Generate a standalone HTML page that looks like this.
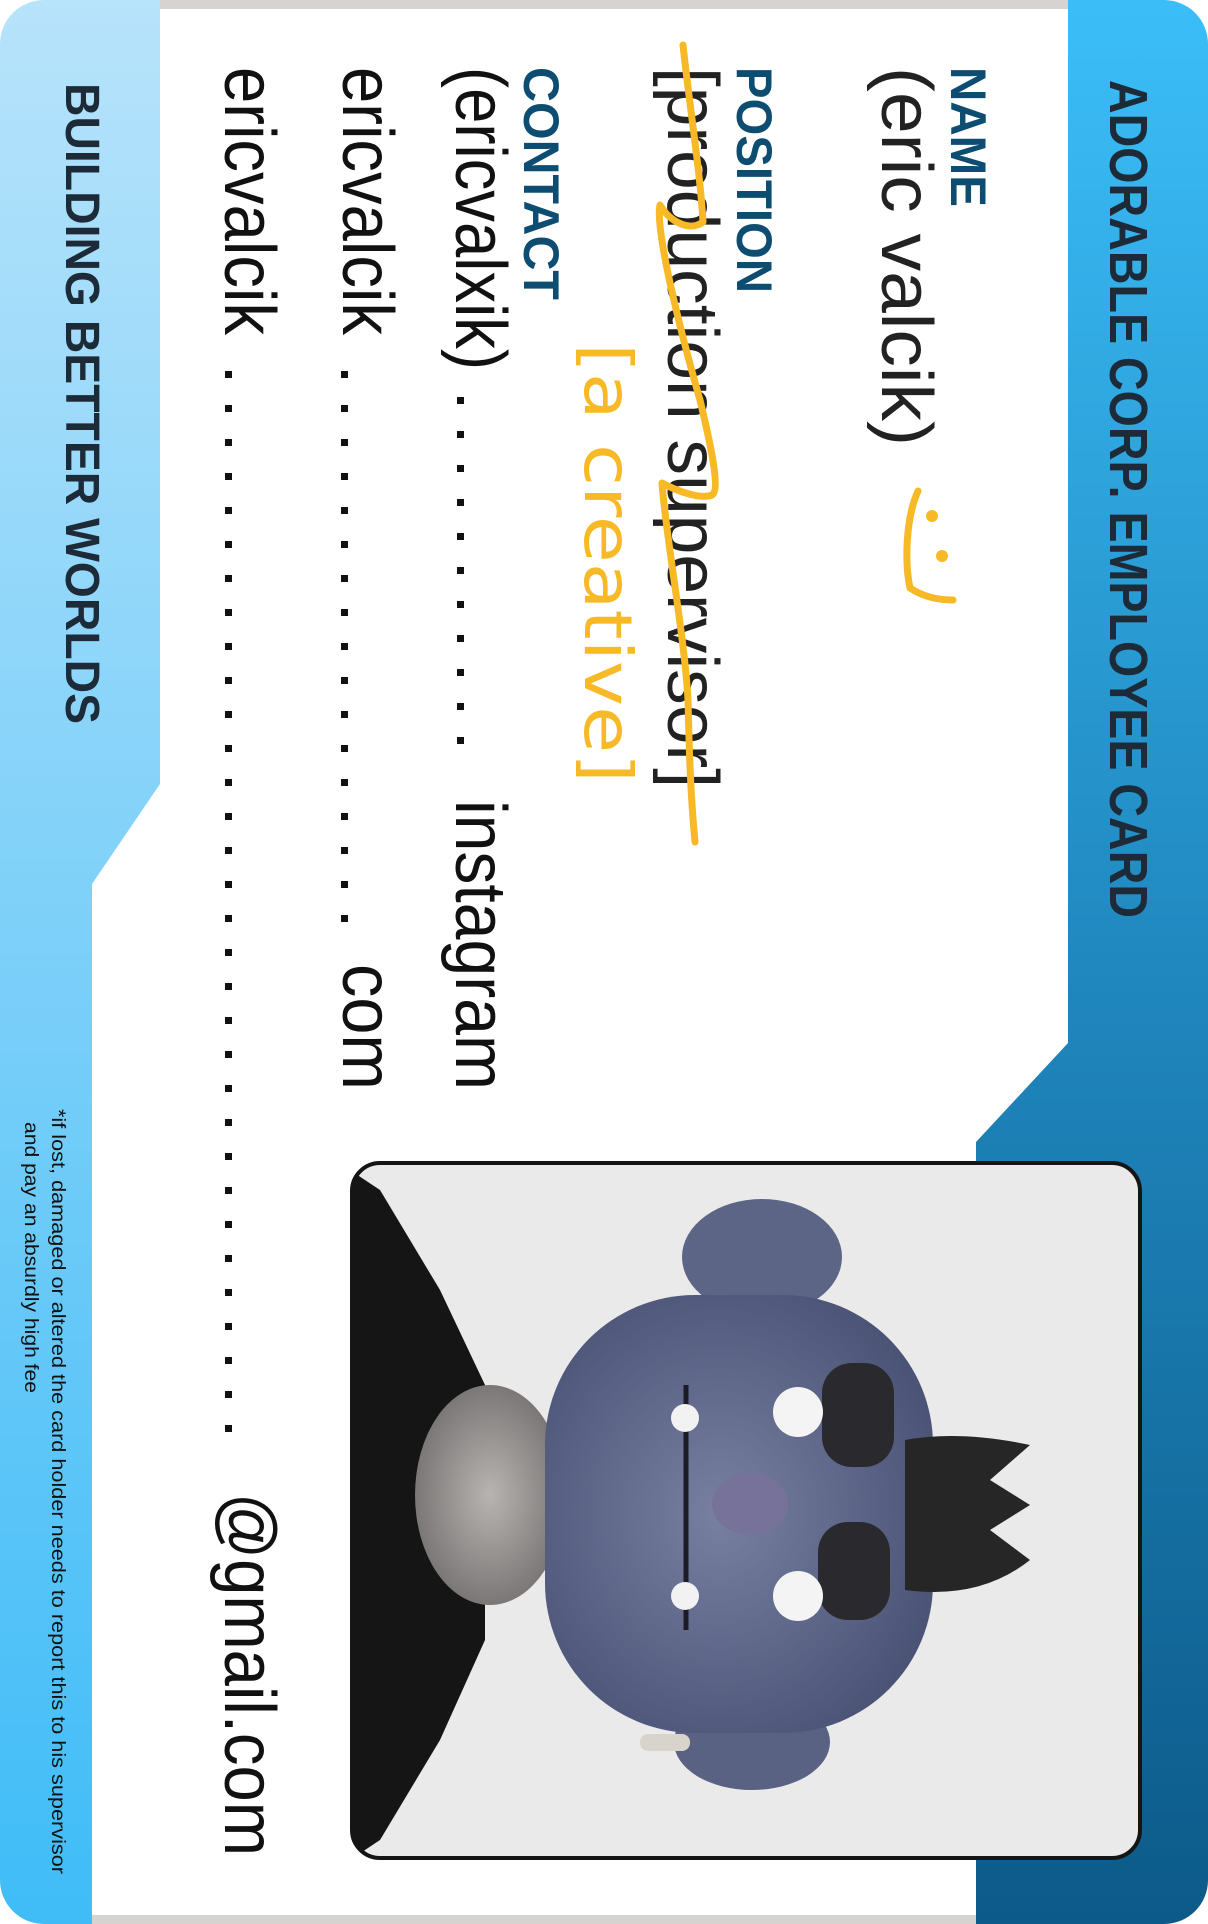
<!DOCTYPE html>
<html><head><meta charset="utf-8"><style>
html,body{margin:0;padding:0;background:#fff;}
svg{display:block;}
</style></head><body>
<svg width="1208" height="1924" viewBox="0 0 1208 1924" xmlns="http://www.w3.org/2000/svg">
<defs>
<linearGradient id="lg" x1="0" y1="0" x2="0" y2="1">
<stop offset="0" stop-color="#b7e3fb"/><stop offset="1" stop-color="#3fbcf7"/></linearGradient>
<linearGradient id="rg" x1="0" y1="0" x2="0" y2="1">
<stop offset="0" stop-color="#3bbef8"/><stop offset="0.5" stop-color="#2088bf"/><stop offset="1" stop-color="#0c5a89"/></linearGradient>
<clipPath id="card"><rect x="0" y="0" width="1208" height="1924" rx="44"/></clipPath>
<clipPath id="ph"><rect x="352" y="1163" width="788" height="695" rx="28"/></clipPath>
<radialGradient id="head" cx="0.45" cy="0.5" r="0.6"><stop offset="0" stop-color="#7880a2"/><stop offset="1" stop-color="#4a5275"/></radialGradient>
<radialGradient id="neck" cx="0.5" cy="0.5" r="0.6"><stop offset="0" stop-color="#b8b4b2"/><stop offset="1" stop-color="#6e6b6a"/></radialGradient>
</defs>
<g clip-path="url(#card)">
<rect x="0" y="0" width="1208" height="1924" fill="#fff"/>
<rect x="150" y="0" width="930" height="9" fill="#d6d3d0"/>
<rect x="90" y="1915" width="900" height="9" fill="#d6d3d0"/>
<polygon points="0,0 160,0 160,784 92,884 92,1924 0,1924" fill="url(#lg)"/>
<polygon points="1068,0 1208,0 1208,1924 976,1924 976,1142 1068,1043" fill="url(#rg)"/>
</g>

<g font-family="Liberation Sans, Arial, sans-serif">
<text transform="translate(1110,80) rotate(90)" font-size="54" font-weight="bold" fill="#1d2b38" textLength="838" lengthAdjust="spacingAndGlyphs">ADORABLE CORP. EMPLOYEE CARD</text>
<text transform="translate(951,67) rotate(90)" font-size="50" font-weight="bold" fill="#0e4d72" textLength="140" lengthAdjust="spacingAndGlyphs">NAME</text>
<text transform="translate(882,67) rotate(90)" font-size="72" fill="#222" textLength="379" lengthAdjust="spacingAndGlyphs">(eric valcik)</text>
<text transform="translate(737,67) rotate(90)" font-size="50" font-weight="bold" fill="#0e4d72" textLength="226" lengthAdjust="spacingAndGlyphs">POSITION</text>
<text transform="translate(668,67) rotate(90)" font-size="72" fill="#222" textLength="721" lengthAdjust="spacingAndGlyphs">[production supervisor]</text>
<text transform="translate(524,67) rotate(90)" font-size="50" font-weight="bold" fill="#0e4d72" textLength="233" lengthAdjust="spacingAndGlyphs">CONTACT</text>
<text transform="translate(456,67) rotate(90)" font-size="72" fill="#111" textLength="303" lengthAdjust="spacingAndGlyphs">(ericvalxik)</text>
<text transform="translate(456,800) rotate(90)" font-size="72" fill="#111" textLength="290" lengthAdjust="spacingAndGlyphs">instagram</text>
<text transform="translate(343,67) rotate(90)" font-size="72" fill="#111" textLength="268" lengthAdjust="spacingAndGlyphs">ericvalcik</text>
<text transform="translate(343,964) rotate(90)" font-size="72" fill="#111" textLength="126" lengthAdjust="spacingAndGlyphs">com</text>
<text transform="translate(225,67) rotate(90)" font-size="72" fill="#111" textLength="268" lengthAdjust="spacingAndGlyphs">ericvalcik</text>
<text transform="translate(225,1493) rotate(90)" font-size="72" fill="#111" textLength="363" lengthAdjust="spacingAndGlyphs">@gmail.com</text>
<text transform="translate(66,83) rotate(90)" font-size="48" font-weight="bold" fill="#1d2b38" textLength="641" lengthAdjust="spacingAndGlyphs">BUILDING BETTER WORLDS</text>
<text transform="translate(52,1109) rotate(90)" font-size="19" fill="#111" textLength="765" lengthAdjust="spacingAndGlyphs">*if lost, damaged or altered the card holder needs to report this to his supervisor</text>
<text transform="translate(25,1122) rotate(90)" font-size="19" fill="#111" textLength="271" lengthAdjust="spacingAndGlyphs">and pay an absurdly high fee</text>
</g>

<g fill="#111">
<!-- dots line1 -->
<g id="d1">
<rect x="457" y="397" width="7" height="7"/><rect x="457" y="431" width="7" height="7"/><rect x="457" y="465" width="7" height="7"/><rect x="457" y="499" width="7" height="7"/><rect x="457" y="533" width="7" height="7"/><rect x="457" y="567" width="7" height="7"/><rect x="457" y="601" width="7" height="7"/><rect x="457" y="635" width="7" height="7"/><rect x="457" y="669" width="7" height="7"/><rect x="457" y="703" width="7" height="7"/><rect x="457" y="737" width="7" height="7"/><rect x="457" y="762" width="0" height="0"/>
</g>
<g>
<rect x="341" y="371" width="7" height="7"/><rect x="341" y="405" width="7" height="7"/><rect x="341" y="439" width="7" height="7"/><rect x="341" y="473" width="7" height="7"/><rect x="341" y="507" width="7" height="7"/><rect x="341" y="541" width="7" height="7"/><rect x="341" y="575" width="7" height="7"/><rect x="341" y="609" width="7" height="7"/><rect x="341" y="643" width="7" height="7"/><rect x="341" y="677" width="7" height="7"/><rect x="341" y="711" width="7" height="7"/><rect x="341" y="745" width="7" height="7"/><rect x="341" y="779" width="7" height="7"/><rect x="341" y="813" width="7" height="7"/><rect x="341" y="847" width="7" height="7"/><rect x="341" y="881" width="7" height="7"/><rect x="341" y="915" width="7" height="7"/>
</g>
<g>
<rect x="225" y="371" width="7" height="7"/><rect x="225" y="405" width="7" height="7"/><rect x="225" y="439" width="7" height="7"/><rect x="225" y="473" width="7" height="7"/><rect x="225" y="507" width="7" height="7"/><rect x="225" y="541" width="7" height="7"/><rect x="225" y="575" width="7" height="7"/><rect x="225" y="609" width="7" height="7"/><rect x="225" y="643" width="7" height="7"/><rect x="225" y="677" width="7" height="7"/><rect x="225" y="711" width="7" height="7"/><rect x="225" y="745" width="7" height="7"/><rect x="225" y="779" width="7" height="7"/><rect x="225" y="813" width="7" height="7"/><rect x="225" y="847" width="7" height="7"/><rect x="225" y="881" width="7" height="7"/><rect x="225" y="915" width="7" height="7"/><rect x="225" y="949" width="7" height="7"/><rect x="225" y="983" width="7" height="7"/><rect x="225" y="1017" width="7" height="7"/><rect x="225" y="1051" width="7" height="7"/><rect x="225" y="1085" width="7" height="7"/><rect x="225" y="1119" width="7" height="7"/><rect x="225" y="1153" width="7" height="7"/><rect x="225" y="1187" width="7" height="7"/><rect x="225" y="1221" width="7" height="7"/><rect x="225" y="1255" width="7" height="7"/><rect x="225" y="1289" width="7" height="7"/><rect x="225" y="1323" width="7" height="7"/><rect x="225" y="1357" width="7" height="7"/><rect x="225" y="1391" width="7" height="7"/><rect x="225" y="1425" width="7" height="7"/>
</g>
</g>

<!-- photo -->
<g clip-path="url(#ph)">
<rect x="352" y="1163" width="788" height="695" fill="#ebeaea"/>
<polygon points="350,1170 380,1190 440,1290 485,1385 485,1640 440,1740 380,1840 350,1860" fill="#151515"/>
<ellipse cx="490" cy="1495" rx="75" ry="110" fill="url(#neck)"/>
<ellipse cx="762" cy="1257" rx="80" ry="58" fill="#5d6586"/>
<ellipse cx="752" cy="1742" rx="78" ry="48" fill="#5a6284"/>
<rect x="545" y="1295" width="388" height="438" rx="150" fill="url(#head)"/>
<path d="M905,1440 Q960,1430 1030,1445 L990,1480 L1030,1505 L990,1530 L1030,1560 Q980,1600 905,1590 Z" fill="#262626"/>
<rect x="822" y="1363" width="72" height="104" rx="30" fill="#2a2a2e"/>
<rect x="818" y="1522" width="72" height="98" rx="30" fill="#2a2a2e"/>
<circle cx="798" cy="1412" r="25" fill="#f4f4f4"/>
<circle cx="798" cy="1596" r="25" fill="#f4f4f4"/>
<ellipse cx="750" cy="1504" rx="38" ry="31" fill="#77729a"/>
<line x1="686" y1="1385" x2="686" y2="1630" stroke="#1c1c28" stroke-width="5"/>
<circle cx="685" cy="1418" r="14" fill="#f2f2f2"/>
<circle cx="685" cy="1596" r="14" fill="#f2f2f2"/>
<rect x="640" y="1734" width="50" height="17" rx="8" fill="#d8d4cc"/>
</g>
<rect x="352" y="1163" width="788" height="695" rx="28" fill="none" stroke="#151515" stroke-width="4"/>

<!-- yellow scribbles -->
<g fill="none" stroke="#f7b925" stroke-width="7" stroke-linecap="round" stroke-linejoin="round">
<path d="M683,45 C690,110 700,170 703,222 C690,232 670,222 660,205 C655,230 680,330 700,400 C712,450 720,490 712,495 C700,500 675,490 662,483 C665,530 685,640 688,700 C689,740 690,790 695,842"/>
<path d="M918,491 C905,520 905,565 910,588 C925,598 940,600 953,600"/>
</g>
<g fill="#f7b925"><circle cx="932" cy="516" r="6"/><circle cx="942" cy="556" r="6"/></g>
<text transform="translate(585,343) rotate(90)" font-family="DejaVu Sans, sans-serif" font-size="66" fill="#f7b925" textLength="440" lengthAdjust="spacingAndGlyphs">[a creative]</text>
</svg>
</body></html>
